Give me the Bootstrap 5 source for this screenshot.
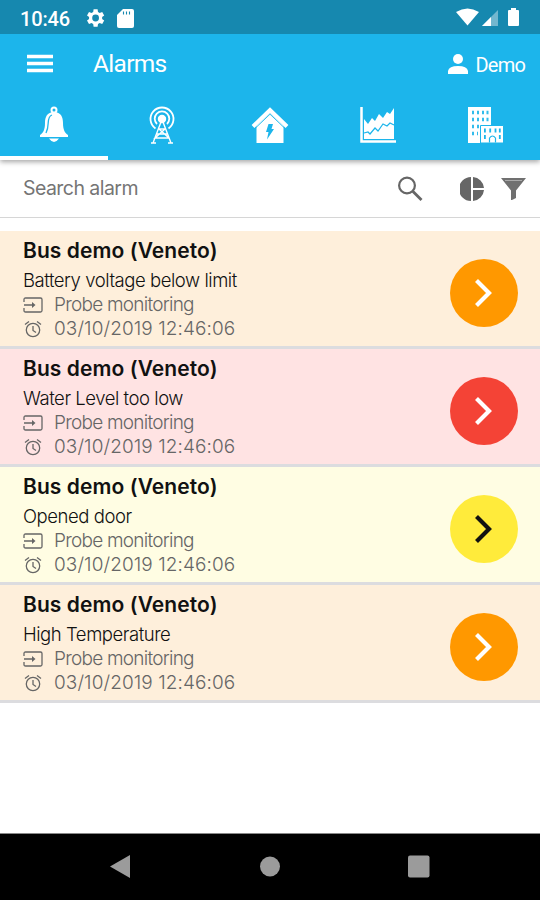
<!DOCTYPE html>
<html lang="en">
<head>
<meta charset="utf-8">
<meta name="viewport" content="width=device-width, initial-scale=1">
<title>Alarms</title>
<link href="https://cdn.jsdelivr.net/npm/bootstrap@5.3.0/dist/css/bootstrap.min.css" rel="stylesheet">
<style>
body{font-family:Inter,"Liberation Sans",sans-serif;background:#fff;width:540px;height:900px;overflow:hidden}
svg{display:block;flex:none}
.statusbar{height:34px;background:#1688af;font:500 20px/32px Roboto,sans-serif;padding:2px 20px 0 20px}
.statusbar span{padding-top:1px;letter-spacing:-.15px}
.gear{margin-left:15px}
.sdcard{margin-left:12px}
.appbar{height:60px;background:#1cb5eb;font-family:Roboto,sans-serif;padding:0 15px 0 27px}
.apptitle{font-size:24.5px;line-height:60px;margin-left:40px;letter-spacing:-.7px}
.username{font-size:20px;line-height:60px;padding-top:2px;letter-spacing:-.8px}
.tabs{height:66px;background:#1cb5eb;box-shadow:0 2px 5px rgba(0,0,0,.35);clip-path:inset(0 0 -10px 0)}
.tab{width:108px;height:66px;border-bottom:4px solid transparent;color:#fff;padding-top:12px}
.tab.current{border-bottom-color:#fff}
.searchbar{height:58px;border-bottom:1px solid #d6d6d6;padding:0 14px 0 23px;color:#757575;margin-bottom:13px}
.searchbar input{font-size:19.5px;letter-spacing:-.55px;color:#757575;outline:0;font-family:inherit}
.searchbar input::placeholder{color:#757575;opacity:1}
.pie{margin-left:37px}.funnel{margin-left:17px}
.alarm{height:118.1px;border-bottom:3px solid #dcdcdf;padding:5px 22px 0 23px;color:#111}
.alarm h2{font-size:21px;line-height:29px;font-weight:600;letter-spacing:.08px;margin:0}
.kind{font-size:18.5px;line-height:24px;font-weight:300;padding-top:3px;letter-spacing:-.45px;height:28px}
.detail{font-size:19px;line-height:24px;font-weight:300;color:#666;height:24px;gap:11px}
.detail .source{letter-spacing:-.75px}
.detail .time{letter-spacing:.08px}
.orange{background:#feefdb}.red{background:#ffe3e3}.yellow{background:#fffde3}
.go{width:68px;height:68px;margin-top:4px}
.orange .go{background:#ff9800;color:#fff}.red .go{background:#f44336;color:#fff}.yellow .go{background:#ffeb3b;color:#111}
.sysnav{height:67px;background:#000;border-top:1px solid #888}
</style>
<script src="https://cdn.jsdelivr.net/npm/bootstrap@5.3.0/dist/js/bootstrap.bundle.min.js"></script>
</head>
<body class="d-flex flex-column">
<svg class="d-none">
<symbol id="chevron" viewBox="0 0 68 68"><path d="M26.500 21.500L39 34 26.500 46.500" fill="none" stroke="currentColor" stroke-width="4.200"/></symbol>
<symbol id="probe" viewBox="0 0 20 16"><path d="M1 5V2.500Q1 1 2.500 1H17.500Q19 1 19 2.500V13.500Q19 15 17.500 15H2.500Q1 15 1 13.500V11M1 8H10" fill="none" stroke="currentColor" stroke-width="1.300"/><path d="M9 5l3.500 3L9 11z" fill="currentColor"/></symbol>
<symbol id="clock" viewBox="0 0 20 18"><g fill="none" stroke="currentColor" stroke-width="1.300"><circle cx="10" cy="10" r="6.700"/><path d="M10 6v4.500l3 2M2 4.500l4-3M18 4.500l-4-3"/></g></symbol>
</svg>
<div class="statusbar d-flex align-items-center text-white">
<span>10:46</span>
<svg class="gear" width="20" height="20" viewBox="2 2 20 20" fill="#fff"><path fill-rule="evenodd" d="M19.100 13a7.700 7.700 0 0 0 0-2l2.100-1.600-2-3.500-2.500 1a7.500 7.500 0 0 0-1.700-1L14.600 3.200h-4L10.200 5.900a7.500 7.500 0 0 0-1.700 1l-2.500-1-2 3.500L6.100 11a7.700 7.700 0 0 0 0 2l-2.100 1.600 2 3.500 2.500-1a7.500 7.500 0 0 0 1.700 1l.4 2.700h4l.4-2.700a7.500 7.500 0 0 0 1.700-1l2.500 1 2-3.500zM12.600 15.400a3.400 3.400 0 1 1 0-6.800 3.400 3.400 0 0 1 0 6.800z"/></svg>
<svg class="sdcard" width="17" height="19" viewBox="0 0 17 19"><path d="M6 0h9q2 0 2 2v15q0 2-2 2H2q-2 0-2-2V6z" fill="#fff"/><path d="M6.500 2.500v3M9.500 2.500v3M12.500 2.500v3" stroke="#1688af" stroke-width="1.100"/></svg>
<svg class="ms-auto" width="64" height="20" viewBox="0 0 64 20" fill="#fff"><path d="M0 4Q11.500-3 23 4L11.500 17.500z"/><path d="M42 2v16H26z" opacity=".4"/><path d="M35 9v9h-9z"/><path d="M53 2h2V0h5v2h2q1 0 1 1v14q0 1-1 1h-9q-1 0-1-1V3q0-1 1-1z"/></svg>
</div>
<header class="appbar d-flex align-items-center text-white">
<svg width="26" height="20" viewBox="0 0 26 20"><path d="M0 2.500h26M0 9.500h26M0 16.500h26" stroke="#fff" stroke-width="3.400"/></svg>
<span class="apptitle">Alarms</span>
<svg class="ms-auto me-2" width="20" height="20" viewBox="0 0 20 20" fill="#fff"><circle cx="10" cy="5" r="5"/><path d="M0 20v-3q1-5 10-5t10 5v3z"/></svg>
<span class="username">Demo</span>
</header>
<nav class="tabs d-flex flex-shrink-0">
<a class="tab current d-flex justify-content-center"><svg width="30" height="38" viewBox="0 0 30 38" fill="#fff"><circle cx="15" cy="4" r="2.500" fill="none" stroke="#fff" stroke-width="2"/><path d="M15 6C8 6 6 11 6 17c0 7-2 10-5 12v2h28v-2c-3-2-5-5-5-12 0-6-2-11-9-11zM10 32.500q5 7 10 0z"/><path d="M13 9Q9.500 10 9.200 17 9 23 7 27" stroke="#1cb5eb" stroke-width="1.300" fill="none"/></svg></a>
<a class="tab d-flex justify-content-center"><svg width="28" height="38" viewBox="0 0 28 38" fill="none" stroke="#fff" stroke-width="1.400"><circle cx="14" cy="13" r="3.500" fill="#fff"/><path d="M9 18a7.300 7.300 0 1 1 10 0M7.500 22.500a11.500 11.500 0 1 1 13 0" stroke-width="1.800"/><path d="M13 16L5 37M15 16l8 21M11 23h6M9 28h10M11 23l10 9M17 23L7 32h14M3 37h5M20 37h5"/></svg></a>
<a class="tab d-flex justify-content-center"><svg width="38" height="38" viewBox="0 0 38 38"><path d="M5.500 20L19 7l13.500 13v17h-27z" fill="#fff"/><path d="M2 20.500L19 4l17 16.500" stroke="#fff" stroke-width="4" fill="none"/><path d="M4.500 22L19 8.200 33.500 22" fill="none" stroke="#1cb5eb" stroke-width=".9"/><path d="M17.500 18h4.500l-1.500 5H23l-7 10.500 1.500-7.500H15z" fill="#1cb5eb"/></svg></a>
<a class="tab d-flex justify-content-center"><svg width="36" height="38" viewBox="0 0 36 38"><path d="M1.500 1v34.500H36" fill="none" stroke="#fff" stroke-width="2.500"/><path d="M4 13l4 5 4-6 3 3 4-7 4 4 4-6 3 2 4-6v31H4z" fill="#fff"/><path d="M4 27l4-1 2 2 5-6 3 3 5-7 4 2 3-3 4 2" fill="none" stroke="#1cb5eb" stroke-width="1.200"/></svg></a>
<a class="tab d-flex justify-content-center"><svg width="36" height="38" viewBox="0 0 36 38"><path d="M0 1h23v36H0z" fill="#fff"/><path d="M4 6.500h2m3 0h2m3 0h2m2.500 0h2M4 13.500h2m3 0h2m3 0h2m2.500 0h2M4 20.500h2m3 0h2M4 27.500h2m3 0h1" stroke="#1cb5eb" stroke-width="3.500" opacity=".9"/><path d="M12.500 19.500H35.500V37h-23z" fill="#fff" stroke="#1cb5eb"/><path d="M16 24.500h1.800m3.500 0h1.800m3.500 0h1.800m2.500 0h1.800M16 31h1.800m13.100 0h1.800" stroke="#1cb5eb" stroke-width="3.800"/><path d="M21.500 36.500V32q3-4 6 0v4.500" fill="none" stroke="#1cb5eb" stroke-width="1.200"/></svg></a>
</nav>
<div class="searchbar d-flex align-items-center flex-shrink-0">
<input class="border-0 p-0 bg-transparent flex-grow-1" type="text" placeholder="Search alarm">
<svg width="26" height="26" viewBox="0 0 26 26" fill="none" stroke="#666"><circle cx="10" cy="9.500" r="7.900" stroke-width="2.200"/><path d="M15.500 15l9 9" stroke-width="2.800"/></svg>
<svg class="pie" width="24" height="24" viewBox="0 0 24 24" fill="#666"><path d="M11 0v24A12 12 0 0 1 11 0zM13 0a12 12 0 0 1 11 11H13zM13 13h11a12 12 0 0 1-11 11z"/></svg>
<svg class="funnel" width="25" height="22" viewBox="0 0 25 22"><path d="M0 0h25L15 12.500V20l-4 2h-1v-9.500z" fill="#707070"/><path d="M4 2.500h17" stroke="#aaa" stroke-width="1"/></svg>
</div>
<main class="flex-grow-1">
<section class="alarm orange d-flex"><div class="flex-grow-1"><h2>Bus demo (Veneto)</h2><div class="kind">Battery voltage below limit</div><div class="detail d-flex align-items-center"><svg width="20" height="16"><use href="#probe"/></svg><span class="source">Probe monitoring</span></div><div class="detail d-flex align-items-center"><svg width="20" height="18"><use href="#clock"/></svg><span class="time">03/10/2019 12:46:06</span></div></div><a class="go rounded-circle align-self-center"><svg width="68" height="68"><use href="#chevron"/></svg></a></section>
<section class="alarm red d-flex"><div class="flex-grow-1"><h2>Bus demo (Veneto)</h2><div class="kind">Water Level too low</div><div class="detail d-flex align-items-center"><svg width="20" height="16"><use href="#probe"/></svg><span class="source">Probe monitoring</span></div><div class="detail d-flex align-items-center"><svg width="20" height="18"><use href="#clock"/></svg><span class="time">03/10/2019 12:46:06</span></div></div><a class="go rounded-circle align-self-center"><svg width="68" height="68"><use href="#chevron"/></svg></a></section>
<section class="alarm yellow d-flex"><div class="flex-grow-1"><h2>Bus demo (Veneto)</h2><div class="kind">Opened door</div><div class="detail d-flex align-items-center"><svg width="20" height="16"><use href="#probe"/></svg><span class="source">Probe monitoring</span></div><div class="detail d-flex align-items-center"><svg width="20" height="18"><use href="#clock"/></svg><span class="time">03/10/2019 12:46:06</span></div></div><a class="go rounded-circle align-self-center"><svg width="68" height="68"><use href="#chevron"/></svg></a></section>
<section class="alarm orange d-flex"><div class="flex-grow-1"><h2>Bus demo (Veneto)</h2><div class="kind">High Temperature</div><div class="detail d-flex align-items-center"><svg width="20" height="16"><use href="#probe"/></svg><span class="source">Probe monitoring</span></div><div class="detail d-flex align-items-center"><svg width="20" height="18"><use href="#clock"/></svg><span class="time">03/10/2019 12:46:06</span></div></div><a class="go rounded-circle align-self-center"><svg width="68" height="68"><use href="#chevron"/></svg></a></section>
</main>
<footer class="sysnav d-flex justify-content-center align-items-center">
<svg width="322" height="26" viewBox="0 0 322 26" fill="#9b9b9b"><path d="M1 12.500L21 1v23z"/><circle cx="161" cy="12.500" r="10"/><rect x="299" y="1.500" width="21.500" height="22" rx="2"/></svg>
</footer>
</body>
</html>
